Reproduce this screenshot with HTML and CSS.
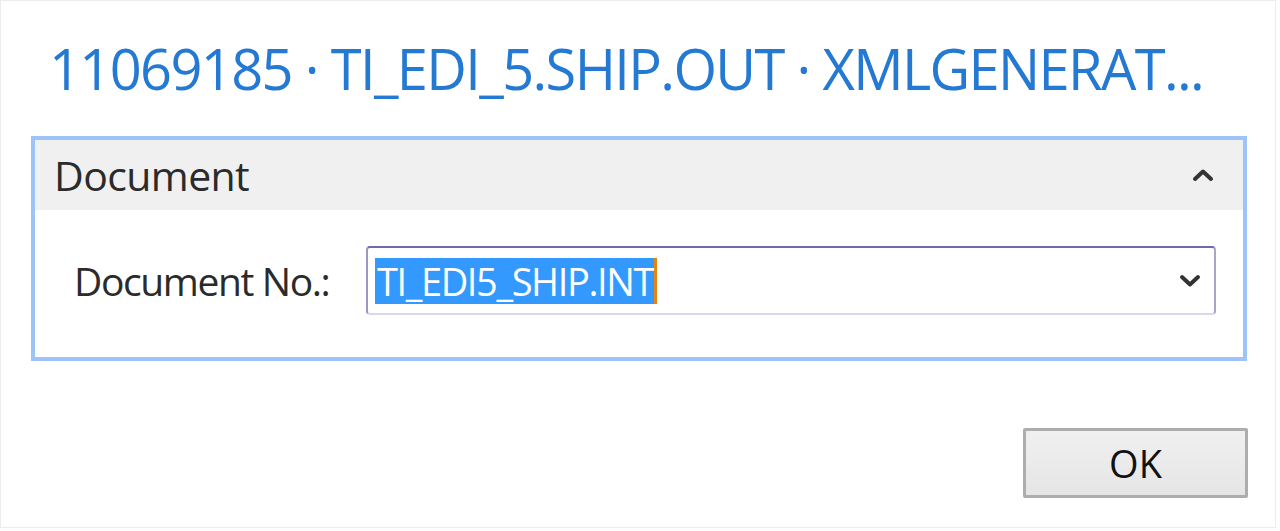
FILE: index.html
```html
<!DOCTYPE html>
<html lang="en">
<head>
    <meta charset="UTF-8">
    <meta name="viewport" content="width=device-width, initial-scale=1.0">
    <title>11069185 · TI_EDI_5.SHIP.OUT · XMLGENERATOR</title>
    <link rel="stylesheet" href="styles.css">
</head>
<body>
    <div class="window">
        <h1 class="title">11069185 · TI_EDI_5.SHIP.OUT · XMLGENERAT...</h1>

        <div class="panel">
            <div class="panel-header">
                <span>Document</span>
                <svg class="chevron" width="22" height="14" viewBox="0 0 22 14">
                    <polyline points="3,11 11,3.5 19,11" />
                </svg>
            </div>
            <div class="panel-body">
                <label class="field-label">Document No.:</label>
                <div class="combo">
                    <span class="combo-value">TI_EDI5_SHIP.INT</span>
                    <svg class="chevron" width="22" height="14" viewBox="0 0 22 14">
                        <polyline points="3,3 11,10.5 19,3" />
                    </svg>
                </div>
            </div>
        </div>

        <div class="actions">
            <button class="ok-button">OK</button>
        </div>
    </div>
</body>
</html>
```

FILE: styles.css
```css
body {
    margin: 0;
    background-color: #fff;
    font-family: "Open Sans", "Noto Sans", sans-serif;
}

.window {
    width: 1276px;
    height: 528px;
    box-sizing: border-box;
    border: 1px solid #ececec;
    background-color: #fff;
}

.title {
    margin: 0;
    padding: 29px 0 0 48px;
    font-size: 56px;
    font-weight: 400;
    line-height: 76px;
    letter-spacing: -1.65px;
    color: #2479d2;
    white-space: nowrap;
}

/* Collapsible group */
.panel {
    margin: 30px 0 0 30px;
    width: 1216px;
    height: 225px;
    box-sizing: border-box;
    border: 4px solid #9cc4f8;
}

.panel-header {
    height: 70px;
    display: flex;
    align-items: center;
    justify-content: space-between;
    padding: 0 29px 0 19px;
    background-color: #f0f0f0;
    font-size: 41px;
    letter-spacing: -0.6px;
    color: #2b2b2b;
}

.chevron polyline {
    fill: none;
    stroke: #333;
    stroke-width: 4;
    stroke-linecap: round;
    stroke-linejoin: round;
}

.panel-body {
    display: flex;
    align-items: center;
    padding: 36px 27px 0 0;
}

.field-label {
    width: 331px;
    box-sizing: border-box;
    padding-left: 39px;
    font-size: 39px;
    letter-spacing: -1.4px;
    color: #2b2b2b;
    white-space: nowrap;
}

.combo {
    flex: 1;
    height: 69px;
    box-sizing: border-box;
    display: flex;
    align-items: center;
    justify-content: space-between;
    padding: 0 13px 0 7px;
    border: 2px solid;
    border-color: #7068ab #aaa4cc #dad7e9 #9d96c4;
    border-radius: 4px;
}

.combo-value {
    height: 46px;
    line-height: 46px;
    padding: 0 1px 0 2px;
    font-size: 38px;
    letter-spacing: -1.4px;
    color: #fff;
    background-color: #3399ff;
    border-right: 3px solid #e8830f;
}

.actions {
    display: flex;
    justify-content: flex-end;
    padding: 67px 27px 0 0;
}

.ok-button {
    width: 225px;
    height: 70px;
    border: 3px solid #adadad;
    border-radius: 2px;
    background: linear-gradient(#f0f0f0, #e5e5e5);
    font-family: "Open Sans", "Noto Sans", sans-serif;
    font-size: 38px;
    color: #111;
    cursor: pointer;
}
```
